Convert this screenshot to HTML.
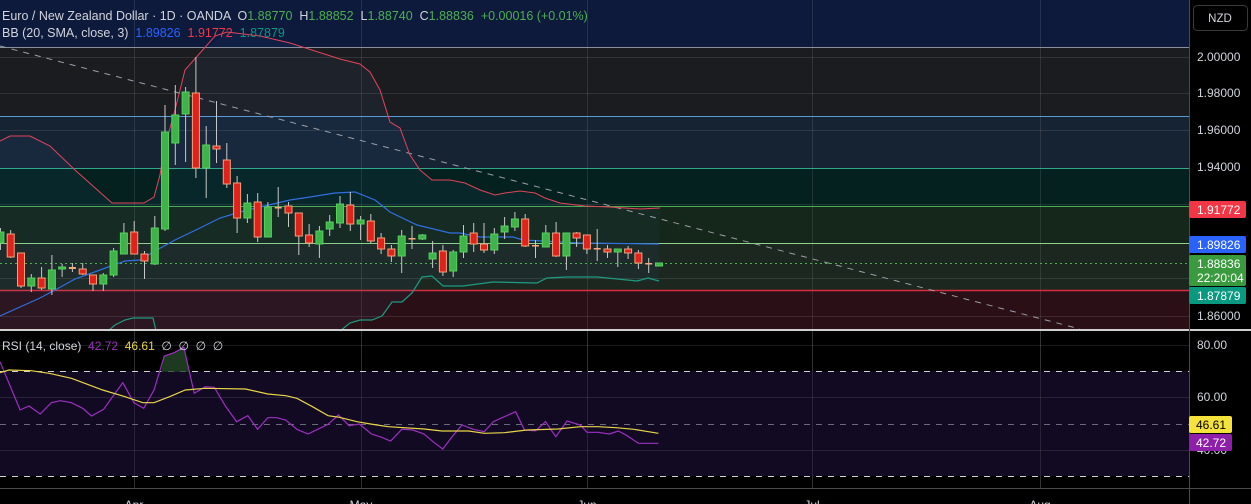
<!DOCTYPE html>
<html><head><meta charset="utf-8"><style>
body{margin:0;background:#000;width:1251px;height:504px;overflow:hidden;font-family:"Liberation Sans",sans-serif}
svg{display:block}
</style></head><body>
<svg width="1251" height="504" xmlns="http://www.w3.org/2000/svg" font-family="Liberation Sans, sans-serif">
<rect width="1251" height="504" fill="#000"/>
<rect x="0" y="0" width="1189" height="47" fill="#0d1a3c"/>
<rect x="0" y="47" width="1189" height="69" fill="#1b1c20"/>
<rect x="0" y="116" width="1189" height="52" fill="#162333"/>
<rect x="0" y="168" width="1189" height="38" fill="#05211f"/>
<rect x="0" y="206" width="1189" height="37" fill="#15261a"/>
<rect x="0" y="243" width="1189" height="47" fill="#1b271f"/>
<rect x="0" y="290" width="1189" height="40" fill="#2a0f16"/>
<g stroke="rgba(255,255,255,0.1)" stroke-width="1">
<line x1="0" y1="57.5" x2="1189" y2="57.5"/><line x1="0" y1="93.5" x2="1189" y2="93.5"/>
<line x1="0" y1="130.5" x2="1189" y2="130.5"/><line x1="0" y1="204.5" x2="1189" y2="204.5"/>
<line x1="0" y1="278.5" x2="1189" y2="278.5"/><line x1="0" y1="316.5" x2="1189" y2="316.5"/>
<line x1="134.5" y1="0" x2="134.5" y2="488"/><line x1="361.5" y1="0" x2="361.5" y2="488"/>
<line x1="587.5" y1="0" x2="587.5" y2="488"/><line x1="812.5" y1="0" x2="812.5" y2="488"/>
<line x1="1040.5" y1="0" x2="1040.5" y2="488"/>
</g>
<line x1="0" y1="47.5" x2="1189" y2="47.5" stroke="#8a8f9a"/>
<line x1="0" y1="116.5" x2="1189" y2="116.5" stroke="#5b9bd5"/>
<line x1="0" y1="168.5" x2="1189" y2="168.5" stroke="#2fa88a"/>
<line x1="0" y1="206.5" x2="1189" y2="206.5" stroke="#4caf50"/>
<line x1="0" y1="243.5" x2="1189" y2="243.5" stroke="#8fd48a"/>
<line x1="0" y1="290.5" x2="1189" y2="290.5" stroke="#d32f3f" stroke-width="1.5"/>
<polygon fill="rgba(60,140,220,0.06)" points="0,141 10,136 30,136 50,146 75,170 112,203 144,203 154,197 164,150 175,110 185,70 200,53 227,32 260,36 290,43 340,59 360,64 370,72 380,90 390,122 400,128 410,155 420,170 432,180 450,180 465,183 495,195 520,191 545,198 560,203 585,206 640,209 660,208 659,281 637,281 597,277 567,277 547,278 537,283 493,282 463,286 443,286 432,276 422,277 412,293 402,302 392,302 382,316 372,320 360,320 350,323 340,330 0,330"/>
<line x1="0" y1="46" x2="1080" y2="329" stroke="#9a9ea6" stroke-width="1" stroke-dasharray="6,6"/>
<polyline fill="none" stroke="#e0445a" stroke-width="1" points="0,141 10,136 30,136 50,146 75,170 112,203 144,203 154,197 160,175 164,150 175,110 185,70 200,53 215,36 227,32 260,36 290,43 340,59 360,64 370,72 380,90 390,122 400,128 410,155 420,170 432,180 450,180 465,183 480,190 495,195 505,193 520,191 535,193 545,198 560,203 585,206 610,207 640,209 660,208"/>
<polyline fill="none" stroke="#2f6fe0" stroke-width="1.2" points="0,316 40,298 55,290 75,279 100,270 125,261 140,260 155,251 175,240 200,228 220,218 240,212 260,207 290,200 310,197 335,193 355,192 375,200 390,212 417,225 450,233 460,233 480,237 513,237 523,240 580,243 659,244"/>
<polyline fill="none" stroke="#1f9a82" stroke-width="1.2" points="108,331 115,325 125,320 133,318 153,318 156,331"/>
<polyline fill="none" stroke="#1f9a82" stroke-width="1.2" points="340,331 350,323 360,320 372,320 382,316 392,302 402,302 412,293 422,277 432,276 443,286 463,286 493,282 537,283 547,278 567,277 597,277 637,281 648,278 659,281"/>
<line x1="0" y1="263.5" x2="1189" y2="263.5" stroke="#4caf50" stroke-dasharray="2,3"/>
<g stroke="#c8c8c8" stroke-width="1">
<line x1="0.4" y1="228" x2="0.4" y2="250"/><line x1="10.7" y1="230" x2="10.7" y2="258"/><line x1="21" y1="253" x2="21" y2="288"/><line x1="31.3" y1="274" x2="31.3" y2="292"/><line x1="41.6" y1="267" x2="41.6" y2="290"/><line x1="51.9" y1="255" x2="51.9" y2="295"/><line x1="62.1" y1="264" x2="62.1" y2="277"/><line x1="72.4" y1="263" x2="72.4" y2="272"/><line x1="82.7" y1="263" x2="82.7" y2="275"/><line x1="93" y1="275" x2="93" y2="291"/><line x1="103.3" y1="273" x2="103.3" y2="291"/><line x1="113.6" y1="248" x2="113.6" y2="277"/><line x1="123.9" y1="223" x2="123.9" y2="254"/><line x1="134.2" y1="221" x2="134.2" y2="254"/><line x1="144.5" y1="251" x2="144.5" y2="279"/><line x1="154.8" y1="216" x2="154.8" y2="265"/><line x1="165" y1="105" x2="165" y2="231"/><line x1="175.3" y1="85" x2="175.3" y2="165"/><line x1="185.6" y1="87" x2="185.6" y2="162"/><line x1="195.9" y1="57" x2="195.9" y2="178"/><line x1="206.2" y1="126" x2="206.2" y2="198"/><line x1="216.5" y1="101" x2="216.5" y2="163"/><line x1="226.8" y1="143" x2="226.8" y2="188"/><line x1="237.1" y1="176" x2="237.1" y2="233"/><line x1="247.4" y1="194" x2="247.4" y2="223"/><line x1="257.7" y1="193" x2="257.7" y2="242"/><line x1="267.9" y1="202" x2="267.9" y2="237"/><line x1="278.2" y1="187" x2="278.2" y2="217"/><line x1="288.5" y1="202" x2="288.5" y2="227"/><line x1="298.8" y1="213" x2="298.8" y2="255"/><line x1="309.1" y1="224" x2="309.1" y2="247"/><line x1="319.4" y1="226" x2="319.4" y2="258"/><line x1="329.7" y1="215" x2="329.7" y2="236"/><line x1="340" y1="196" x2="340" y2="228"/><line x1="350.3" y1="192" x2="350.3" y2="231"/><line x1="360.6" y1="216" x2="360.6" y2="240"/><line x1="370.8" y1="214" x2="370.8" y2="243"/><line x1="381.1" y1="233" x2="381.1" y2="254"/><line x1="391.4" y1="245" x2="391.4" y2="262"/><line x1="401.7" y1="230" x2="401.7" y2="273"/><line x1="412" y1="226" x2="412" y2="249"/><line x1="422.3" y1="234" x2="422.3" y2="240"/><line x1="432.6" y1="241" x2="432.6" y2="268"/><line x1="442.9" y1="245" x2="442.9" y2="276"/><line x1="453.2" y1="250" x2="453.2" y2="277"/><line x1="463.5" y1="225" x2="463.5" y2="258"/><line x1="473.7" y1="223" x2="473.7" y2="252"/><line x1="484" y1="223" x2="484" y2="253"/><line x1="494.3" y1="228" x2="494.3" y2="254"/><line x1="504.6" y1="217" x2="504.6" y2="239"/><line x1="514.9" y1="212" x2="514.9" y2="231"/><line x1="525.2" y1="214" x2="525.2" y2="247"/><line x1="535.5" y1="240" x2="535.5" y2="258"/><line x1="545.8" y1="225" x2="545.8" y2="247"/><line x1="556.1" y1="222" x2="556.1" y2="257"/><line x1="566.4" y1="233" x2="566.4" y2="270"/><line x1="576.6" y1="232" x2="576.6" y2="247"/><line x1="586.9" y1="235" x2="586.9" y2="254"/><line x1="597.2" y1="229" x2="597.2" y2="261"/><line x1="607.5" y1="245" x2="607.5" y2="258"/><line x1="617.8" y1="249" x2="617.8" y2="267"/><line x1="628.1" y1="246" x2="628.1" y2="259"/><line x1="638.4" y1="250" x2="638.4" y2="269"/><line x1="648.7" y1="258" x2="648.7" y2="273"/>
</g>
<g fill="#3fb24a" stroke="#55d05c" stroke-width="1">
<rect x="-3.1" y="232" width="7" height="11"/><rect x="27.8" y="278" width="7" height="8"/><rect x="48.4" y="270" width="7" height="19"/><rect x="58.6" y="267" width="7" height="2"/><rect x="99.8" y="275" width="7" height="9"/><rect x="110.1" y="251" width="7" height="24"/><rect x="120.4" y="233" width="7" height="21"/><rect x="151.3" y="228" width="7" height="36"/><rect x="161.5" y="132" width="7" height="97"/><rect x="171.8" y="115" width="7" height="28"/><rect x="182.1" y="92" width="7" height="22"/><rect x="202.7" y="145" width="7" height="23"/><rect x="243.9" y="203" width="7" height="15"/><rect x="264.4" y="207" width="7" height="30"/><rect x="315.9" y="231" width="7" height="13"/><rect x="326.2" y="222" width="7" height="7"/><rect x="336.5" y="204" width="7" height="19"/><rect x="357.1" y="220" width="7" height="4"/><rect x="398.2" y="236" width="7" height="20"/><rect x="418.8" y="235" width="7" height="4"/><rect x="429.1" y="253" width="7" height="6"/><rect x="449.7" y="252" width="7" height="19"/><rect x="460" y="236" width="7" height="16"/><rect x="490.8" y="234" width="7" height="16"/><rect x="501.1" y="226" width="7" height="6"/><rect x="511.4" y="219" width="7" height="8"/><rect x="542.3" y="233" width="7" height="14"/><rect x="562.9" y="233" width="7" height="23"/><rect x="614.3" y="249" width="7" height="3"/><rect x="655.5" y="263" width="7" height="3"/>
</g>
<g fill="#e0221a" stroke="#f5a07a" stroke-width="1">
<rect x="7.2" y="234" width="7" height="23"/><rect x="17.5" y="253" width="7" height="33"/><rect x="38.1" y="278" width="7" height="10"/><rect x="79.2" y="269" width="7" height="5"/><rect x="89.5" y="275" width="7" height="9"/><rect x="130.7" y="232" width="7" height="22"/><rect x="141" y="254" width="7" height="7"/><rect x="192.4" y="93" width="7" height="75"/><rect x="213" y="146" width="7" height="3"/><rect x="223.3" y="160" width="7" height="24"/><rect x="233.6" y="183" width="7" height="35"/><rect x="254.2" y="202" width="7" height="35"/><rect x="285" y="206" width="7" height="7"/><rect x="295.3" y="213" width="7" height="23"/><rect x="305.6" y="235" width="7" height="8"/><rect x="346.8" y="205" width="7" height="19"/><rect x="367.3" y="221" width="7" height="20"/><rect x="377.6" y="238" width="7" height="11"/><rect x="387.9" y="249" width="7" height="7"/><rect x="439.4" y="251" width="7" height="21"/><rect x="470.2" y="233" width="7" height="11"/><rect x="480.5" y="244" width="7" height="6"/><rect x="521.7" y="219" width="7" height="27"/><rect x="552.6" y="233" width="7" height="23"/><rect x="573.1" y="233" width="7" height="5"/><rect x="583.4" y="235" width="7" height="14"/><rect x="604" y="249" width="7" height="3"/><rect x="624.6" y="249" width="7" height="4"/><rect x="634.9" y="253" width="7" height="10"/>
</g>
<g fill="#f5a880">
<rect x="68.9" y="267" width="7" height="2"/><rect x="274.7" y="207" width="7" height="1.5"/><rect x="408.5" y="238" width="7" height="1.5"/><rect x="532" y="245" width="7" height="1.5"/><rect x="593.7" y="248" width="7" height="1.5"/><rect x="645.2" y="263" width="7" height="1.5"/>
</g>
<text x="2" y="20" font-size="12.5" fill="#d1d4dc" xml:space="preserve">Euro / New Zealand Dollar · 1D · OANDA  O<tspan fill="#4caf50">1.88770</tspan>  H<tspan fill="#4caf50">1.88852</tspan>  L<tspan fill="#4caf50">1.88740</tspan>  C<tspan fill="#4caf50">1.88836</tspan>  <tspan fill="#4caf50">+0.00016 (+0.01%)</tspan></text>
<text x="2" y="37" font-size="12.5" fill="#d1d4dc" xml:space="preserve">BB (20, SMA, close, 3)  <tspan fill="#2962ff">1.89826</tspan>  <tspan fill="#f23645">1.91772</tspan>  <tspan fill="#089981">1.87879</tspan></text>
<rect x="0" y="329" width="1251" height="2" fill="#cfcfcf"/>
<rect x="0" y="371" width="1189" height="105" fill="#120a22"/>
<g stroke="rgba(255,255,255,0.1)"><line x1="0" y1="345.5" x2="1189" y2="345.5"/><line x1="0" y1="397.5" x2="1189" y2="397.5"/><line x1="0" y1="450.5" x2="1189" y2="450.5"/>
<line x1="134.5" y1="331" x2="134.5" y2="488"/><line x1="361.5" y1="331" x2="361.5" y2="488"/><line x1="587.5" y1="331" x2="587.5" y2="488"/><line x1="812.5" y1="331" x2="812.5" y2="488"/><line x1="1040.5" y1="331" x2="1040.5" y2="488"/></g>
<line x1="0" y1="371.5" x2="1189" y2="371.5" stroke="#d0d0d0" stroke-dasharray="6,6"/>
<line x1="0" y1="476.5" x2="1189" y2="476.5" stroke="#d0d0d0" stroke-dasharray="6,6"/>
<line x1="0" y1="424.5" x2="1189" y2="424.5" stroke="#6a6a7a" stroke-dasharray="6,6"/>
<polygon fill="#1d3a20" points="161,371.7 164.3,356 174.1,352.7 183.9,347.3 190,371.7"/>
<polyline fill="none" stroke="#9c2fc0" stroke-width="1.2" points="0,361.7 20.1,410 29,406 40.2,414 51.3,402.7 60.3,400.7 71.4,402.7 82.6,408.3 91.5,416 103.6,409.3 113.8,395 122.8,382.7 133.9,402.7 143.7,408.3 154,390 164.3,356 174.1,352.7 183.9,347.3 194.2,393.3 205.3,386.7 214.3,387.3 225.4,406 236.6,421.7 247.8,415.7 257.6,429.3 267.8,417.7 276.8,417.7 285.7,420 296.9,429.3 308,434 317.8,429.3 328.1,424.3 338.4,415 349.1,425.7 359.4,424 371.4,434 381.7,437.3 390.6,441 401.8,429.3 412.9,430 424.1,434 433,441.7 442.8,449 451.7,437.3 462,425 473.2,429.3 484.3,431.7 493.3,421.7 504.4,416.7 515.6,411.7 524.5,430 535.7,430.7 545.5,421.7 555.8,436.7 567,421 580.3,425 587,432.3 598.2,432.3 609.3,434 618.3,431 627.2,435.7 638.4,443.3 658.4,443.3"/>
<polyline fill="none" stroke="#e8d44a" stroke-width="1.2" points="0,372.7 8.9,370 31.2,370.7 49.1,373.3 71.4,378.3 102.7,390 125,396.7 142.8,402.7 154,402.7 169.6,396.7 185.3,390 205.3,388.3 245.5,389 267.8,394 285.7,395.7 296.9,398.3 312.5,406.7 328.1,415.7 339.3,417.3 357.1,421.7 370.5,424 388.4,426.7 424.1,429 441.9,431 468.7,431 484.3,433.3 504.4,432.7 526.8,430 558,429 580.3,426.7 598.2,426.7 616,427.7 633.9,429.3 658.4,433.3"/>
<text x="2" y="350" font-size="12" fill="#d1d4dc" xml:space="preserve">RSI (14, close)  <tspan fill="#9c2fc0">42.72</tspan>  <tspan fill="#e8d44a">46.61</tspan>  ∅  ∅  ∅  ∅</text>
<line x1="0" y1="488.5" x2="1251" y2="488.5" stroke="#4a4a4a"/>
<g font-size="12" fill="#d1d4dc" text-anchor="middle"><text x="134" y="509">Apr</text><text x="361" y="509">May</text><text x="587" y="509">Jun</text><text x="812" y="509">Jul</text><text x="1040" y="509">Aug</text></g>
<line x1="1189.5" y1="0" x2="1189.5" y2="504" stroke="#4a4a4a"/>
<rect x="1193.5" y="5.5" width="54" height="25" rx="4" fill="#000" stroke="#3a3a3a"/>
<text x="1220" y="22" font-size="11.5" fill="#d1d4dc" text-anchor="middle">NZD</text>
<g font-size="12" fill="#d1d4dc"><text x="1197" y="61">2.00000</text><text x="1197" y="97">1.98000</text><text x="1197" y="134">1.96000</text><text x="1197" y="171">1.94000</text><text x="1197" y="320">1.86000</text>
<text x="1197" y="349">80.00</text><text x="1197" y="401">60.00</text><text x="1197" y="454">40.00</text></g>
<rect x="1189" y="201" width="57" height="17" rx="2" fill="#f23645"/><text x="1197" y="214" font-size="12" fill="#fff">1.91772</text>
<rect x="1189" y="236" width="57" height="17" rx="2" fill="#2962ff"/><text x="1197" y="249" font-size="12" fill="#fff">1.89826</text>
<rect x="1189" y="255" width="57" height="31" rx="2" fill="#3a9a3e"/><text x="1197" y="268" font-size="12" fill="#fff">1.88836</text><text x="1197" y="282" font-size="12" fill="#fff">22:20:04</text>
<rect x="1189" y="287" width="57" height="17" rx="2" fill="#089981"/><text x="1197" y="300" font-size="12" fill="#fff">1.87879</text>
<rect x="1189" y="416" width="43" height="17" rx="2" fill="#f5e23a"/><text x="1196" y="429" font-size="12" fill="#000">46.61</text>
<rect x="1189" y="434" width="43" height="17" rx="2" fill="#8e1fa8"/><text x="1196" y="447" font-size="12" fill="#fff">42.72</text>
</svg>
</body></html>
